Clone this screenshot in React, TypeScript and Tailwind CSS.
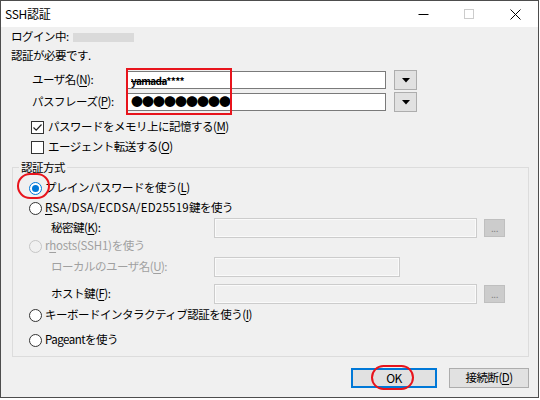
import React from 'react';

const font = "font-['Noto_Sans_CJK_JP',sans-serif]";

function U({ children }: { children: React.ReactNode }) {
  return <span className="underline underline-offset-[2px] decoration-[1px]">{children}</span>;
}

function Checkbox({ checked }: { checked?: boolean }) {
  return (
    <span className="flex h-[13px] w-[13px] shrink-0 items-center justify-center border border-[#333333] bg-white">
      {checked && (
        <svg width="11" height="11" viewBox="0 0 11 11">
          <path d="M1.5 5.5 L4.2 8.2 L9.5 2.5" fill="none" stroke="#222" strokeWidth="1.2" />
        </svg>
      )}
    </span>
  );
}

function Radio({ checked, disabled }: { checked?: boolean; disabled?: boolean }) {
  const ring = checked ? 'border-[#0078d7]' : disabled ? 'border-[#c6c6c6]' : 'border-[#333333]';
  return (
    <span
      className={`flex h-[13px] w-[13px] shrink-0 items-center justify-center rounded-full border ${ring} ${
        disabled ? 'bg-[#f0f0f0]' : 'bg-white'
      }`}
    >
      {checked && <span className="h-[7px] w-[7px] rounded-full bg-[#0078d7]" />}
    </span>
  );
}

function DropButton() {
  return (
    <span className="ml-[8px] flex h-[20px] w-[23px] items-center justify-center border border-[#adadad] bg-[#e1e1e1]">
      <svg width="8" height="5" viewBox="0 0 8 5">
        <polygon points="0,0 8,0 4,4.5" fill="#000" />
      </svg>
    </span>
  );
}

function DisabledInput({ width }: { width: string }) {
  return <span className={`h-[20px] ${width} border border-[#cccccc] bg-[#f0f0f0] shadow-[inset_0_0_0_1px_#fafafa]`} />;
}

function DotsButton() {
  return (
    <span className="ml-[7px] flex h-[18px] w-[21px] items-center justify-center border border-[#bfbfbf] bg-[#cccccc] text-[10px] leading-none text-[#838383]">
      ...
    </span>
  );
}

export default function App() {
  return (
    <div className={`relative h-[400px] w-[540px] bg-white text-[11.5px] tracking-[-0.5px] text-black ${font}`}>
      <div className="flex h-[398px] w-[539px] flex-col border border-[#4d4d4d] bg-[#f0f0f0]">
        {/* Title bar */}
        <div className="flex h-[26px] items-center bg-white pl-[4px]">
          <span className="text-[12px] tracking-[-0.3px]">SSH認証</span>
          <div className="ml-auto flex h-full">
            <span className="flex w-[46px] items-center justify-center">
              <svg width="11" height="11" viewBox="0 0 11 11">
                <path d="M0.5 5.5 H10.5" stroke="#000" strokeWidth="1" />
              </svg>
            </span>
            <span className="flex w-[46px] items-center justify-center">
              <svg width="11" height="11" viewBox="0 0 11 11">
                <rect x="0.5" y="0.5" width="9" height="9" fill="none" stroke="#cccccc" strokeWidth="1" />
              </svg>
            </span>
            <span className="flex w-[46px] items-center justify-center">
              <svg width="11" height="11" viewBox="0 0 11 11">
                <path d="M0.5 0.5 L10.5 10.5 M10.5 0.5 L0.5 10.5" stroke="#000" strokeWidth="1" />
              </svg>
            </span>
          </div>
        </div>

        {/* Body */}
        <div className="flex flex-col pl-[10px] pr-[9px]">
          <div className="mt-[2px] flex h-[16px] items-center">
            <span className="w-[62px]">ログイン中:</span>
            <span className="h-[9px] w-[61px] bg-[#dadada]" />
          </div>
          <div className="mt-[3px] flex h-[16px] items-center">認証が必要です.</div>

          <div className="mt-[6px] flex h-[20px] items-center">
            <span className="ml-[21px] w-[95px]">
              ユーザ名(<U>N</U>):
            </span>
            <span className="flex h-[18px] w-[259px] items-center border border-[#7a7a7a] bg-white pl-[3px]">
              <span className="text-[10px] font-bold tracking-[-0.6px]">
                <span className="line-through">yamada</span>****
              </span>
            </span>
            <DropButton />
          </div>
          <div className="mt-[2px] flex h-[20px] items-center">
            <span className="ml-[21px] w-[95px]">
              パスフレーズ(<U>P</U>):
            </span>
            <span className="flex h-[18px] w-[259px] items-center border border-[#7a7a7a] bg-white pl-[3px]">
              <span className="text-[12px] leading-none tracking-[-1px]">●●●●●●●●●</span>
            </span>
            <DropButton />
          </div>

          <div className="mt-[7px] flex h-[16px] items-center pl-[20px]">
            <Checkbox checked />
            <span className="ml-[4px]">
              パスワードをメモリ上に記憶する(<U>M</U>)
            </span>
          </div>
          <div className="mt-[4px] flex h-[16px] items-center pl-[20px]">
            <Checkbox />
            <span className="ml-[4px]">
              エージェント転送する(<U>O</U>)
            </span>
          </div>

          <fieldset className="ml-[1px] mt-[4px] border border-[#dcdcdc] pb-[8px]">
            <legend className="ml-[6px] h-[16px] px-[2px] leading-[16px]">認証方式</legend>
            <div className="flex flex-col pl-[16px]">
              <div className="mt-[5px] flex h-[16px] items-center">
                <Radio checked />
                <span className="ml-[3px]">
                  プレインパスワードを使う(<U>L</U>)
                </span>
              </div>
              <div className="mt-[4px] flex h-[16px] items-center">
                <Radio />
                <span className="ml-[3px]">
                  <span className="tracking-[0.25px]">
                    <U>R</U>SA/DSA/ECDSA/ED25519
                  </span>
                  鍵を使う
                </span>
              </div>
              <div className="mt-[2px] flex h-[20px] items-center">
                <span className="ml-[22px] w-[163px]">
                  秘密鍵(<U>K</U>):
                </span>
                <DisabledInput width="w-[263px]" />
                <DotsButton />
              </div>
              <div className="flex h-[16px] items-center text-[#a0a0a0]">
                <Radio disabled />
                <span className="ml-[3px]">
                  <span className="tracking-[-0.2px]">
                    r<U>h</U>osts(SSH1)
                  </span>
                  を使う
                </span>
              </div>
              <div className="mt-[3px] flex h-[20px] items-center">
                <span className="ml-[22px] w-[163px] text-[#a0a0a0]">
                  ローカルのユーザ名(<U>U</U>):
                </span>
                <DisabledInput width="w-[186px]" />
              </div>
              <div className="mt-[7px] flex h-[20px] items-center">
                <span className="ml-[22px] w-[163px]">
                  ホスト鍵(<U>F</U>):
                </span>
                <DisabledInput width="w-[263px]" />
                <DotsButton />
              </div>
              <div className="mt-[3px] flex h-[16px] items-center">
                <Radio />
                <span className="ml-[3px]">
                  キーボードインタラクティブ認証を使う(<U>I</U>)
                </span>
              </div>
              <div className="mt-[9px] flex h-[16px] items-center">
                <Radio />
                <span className="ml-[3px]">Pageantを使う</span>
              </div>
            </div>
          </fieldset>

          <div className="mt-[11px] flex justify-end gap-[12px]">
            <button className="flex h-[20px] w-[86px] items-center justify-center border-2 border-[#0078d7] bg-[#e1e1e1] text-[12px]">
              OK
            </button>
            <button className="flex h-[20px] w-[80px] items-center justify-center border border-[#adadad] bg-[#e1e1e1]">
              接続断(<U>D</U>)
            </button>
          </div>
        </div>
      </div>

      {/* Red annotations */}
      <div className="absolute left-[126px] top-[68px] h-[47px] w-[106px] border-2 border-[#e8141c]" />
      <div className="absolute left-[17px] top-[173px] h-[26px] w-[33px] rounded-full border-2 border-[#e8141c]" />
      <div className="absolute left-[371px] top-[365px] h-[25px] w-[43px] rounded-full border-2 border-[#e8141c]" />
    </div>
  );
}
